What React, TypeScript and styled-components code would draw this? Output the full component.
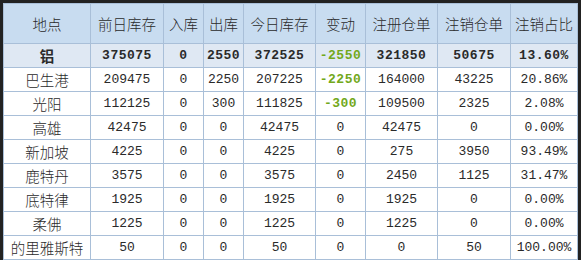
import React from 'react';
import styled, { createGlobalStyle } from 'styled-components';

const Global = createGlobalStyle`
  html, body {
    margin: 0;
    padding: 0;
    background: #fff;
  }
`;

const Frame = styled.div`
  width: 581px;
  height: 260px;
  box-sizing: border-box;
  border: 3px solid #222;
  border-bottom: none;
  overflow: hidden;
`;

const Grid = styled.div`
  display: grid;
  grid-template-columns: 86px 72px 39px 39px 71px 49px 71px 72px 66px;
  grid-auto-rows: 23px;
  grid-template-rows: 39px;
  gap: 1px;
  padding: 1px;
  background: #a9bfd8;
  width: max-content;
`;

const Cell = styled.div<{ $head?: boolean; $total?: boolean; $mono?: boolean; $green?: boolean }>`
  display: flex;
  align-items: center;
  justify-content: center;
  white-space: nowrap;
  background: ${p => (p.$head ? '#c8dcf0' : p.$total ? '#dfe8f3' : '#fff')};
  color: ${p => (p.$green ? '#72a81a' : '#2a2a2a')};
  font-family: ${p => (p.$mono ? '"Liberation Mono", "Noto Sans CJK SC", monospace' : '"Noto Sans CJK SC", sans-serif')};
  font-size: ${p => (p.$mono ? '13px' : '14.5px')};
  font-weight: ${p => (p.$total || p.$green ? 700 : p.$mono ? 400 : 300)};
  letter-spacing: ${p => (p.$mono && (p.$total || p.$green) ? '0.5px' : '0')};
`;

const heads = ['地点', '前日库存', '入库', '出库', '今日库存', '变动', '注册仓单', '注销仓单', '注销占比'];

const rows: string[][] = [
  ['铝', '375075', '0', '2550', '372525', '-2550', '321850', '50675', '13.60%'],
  ['巴生港', '209475', '0', '2250', '207225', '-2250', '164000', '43225', '20.86%'],
  ['光阳', '112125', '0', '300', '111825', '-300', '109500', '2325', '2.08%'],
  ['高雄', '42475', '0', '0', '42475', '0', '42475', '0', '0.00%'],
  ['新加坡', '4225', '0', '0', '4225', '0', '275', '3950', '93.49%'],
  ['鹿特丹', '3575', '0', '0', '3575', '0', '2450', '1125', '31.47%'],
  ['底特律', '1925', '0', '0', '1925', '0', '1925', '0', '0.00%'],
  ['柔佛', '1225', '0', '0', '1225', '0', '1225', '0', '0.00%'],
  ['的里雅斯特', '50', '0', '0', '50', '0', '0', '50', '100.00%'],
];

export default function App() {
  return (
    <>
      <Global />
      <Frame>
        <Grid>
          {heads.map(h => (
            <Cell key={h} $head>{h}</Cell>
          ))}
          {rows.map((r, i) =>
            r.map((v, j) => (
              <Cell
                key={`${i}-${j}`}
                $total={i === 0}
                $mono={j > 0}
                $green={j === 5 && v.startsWith('-')}
              >
                {v}
              </Cell>
            ))
          )}
        </Grid>
      </Frame>
    </>
  );
}
